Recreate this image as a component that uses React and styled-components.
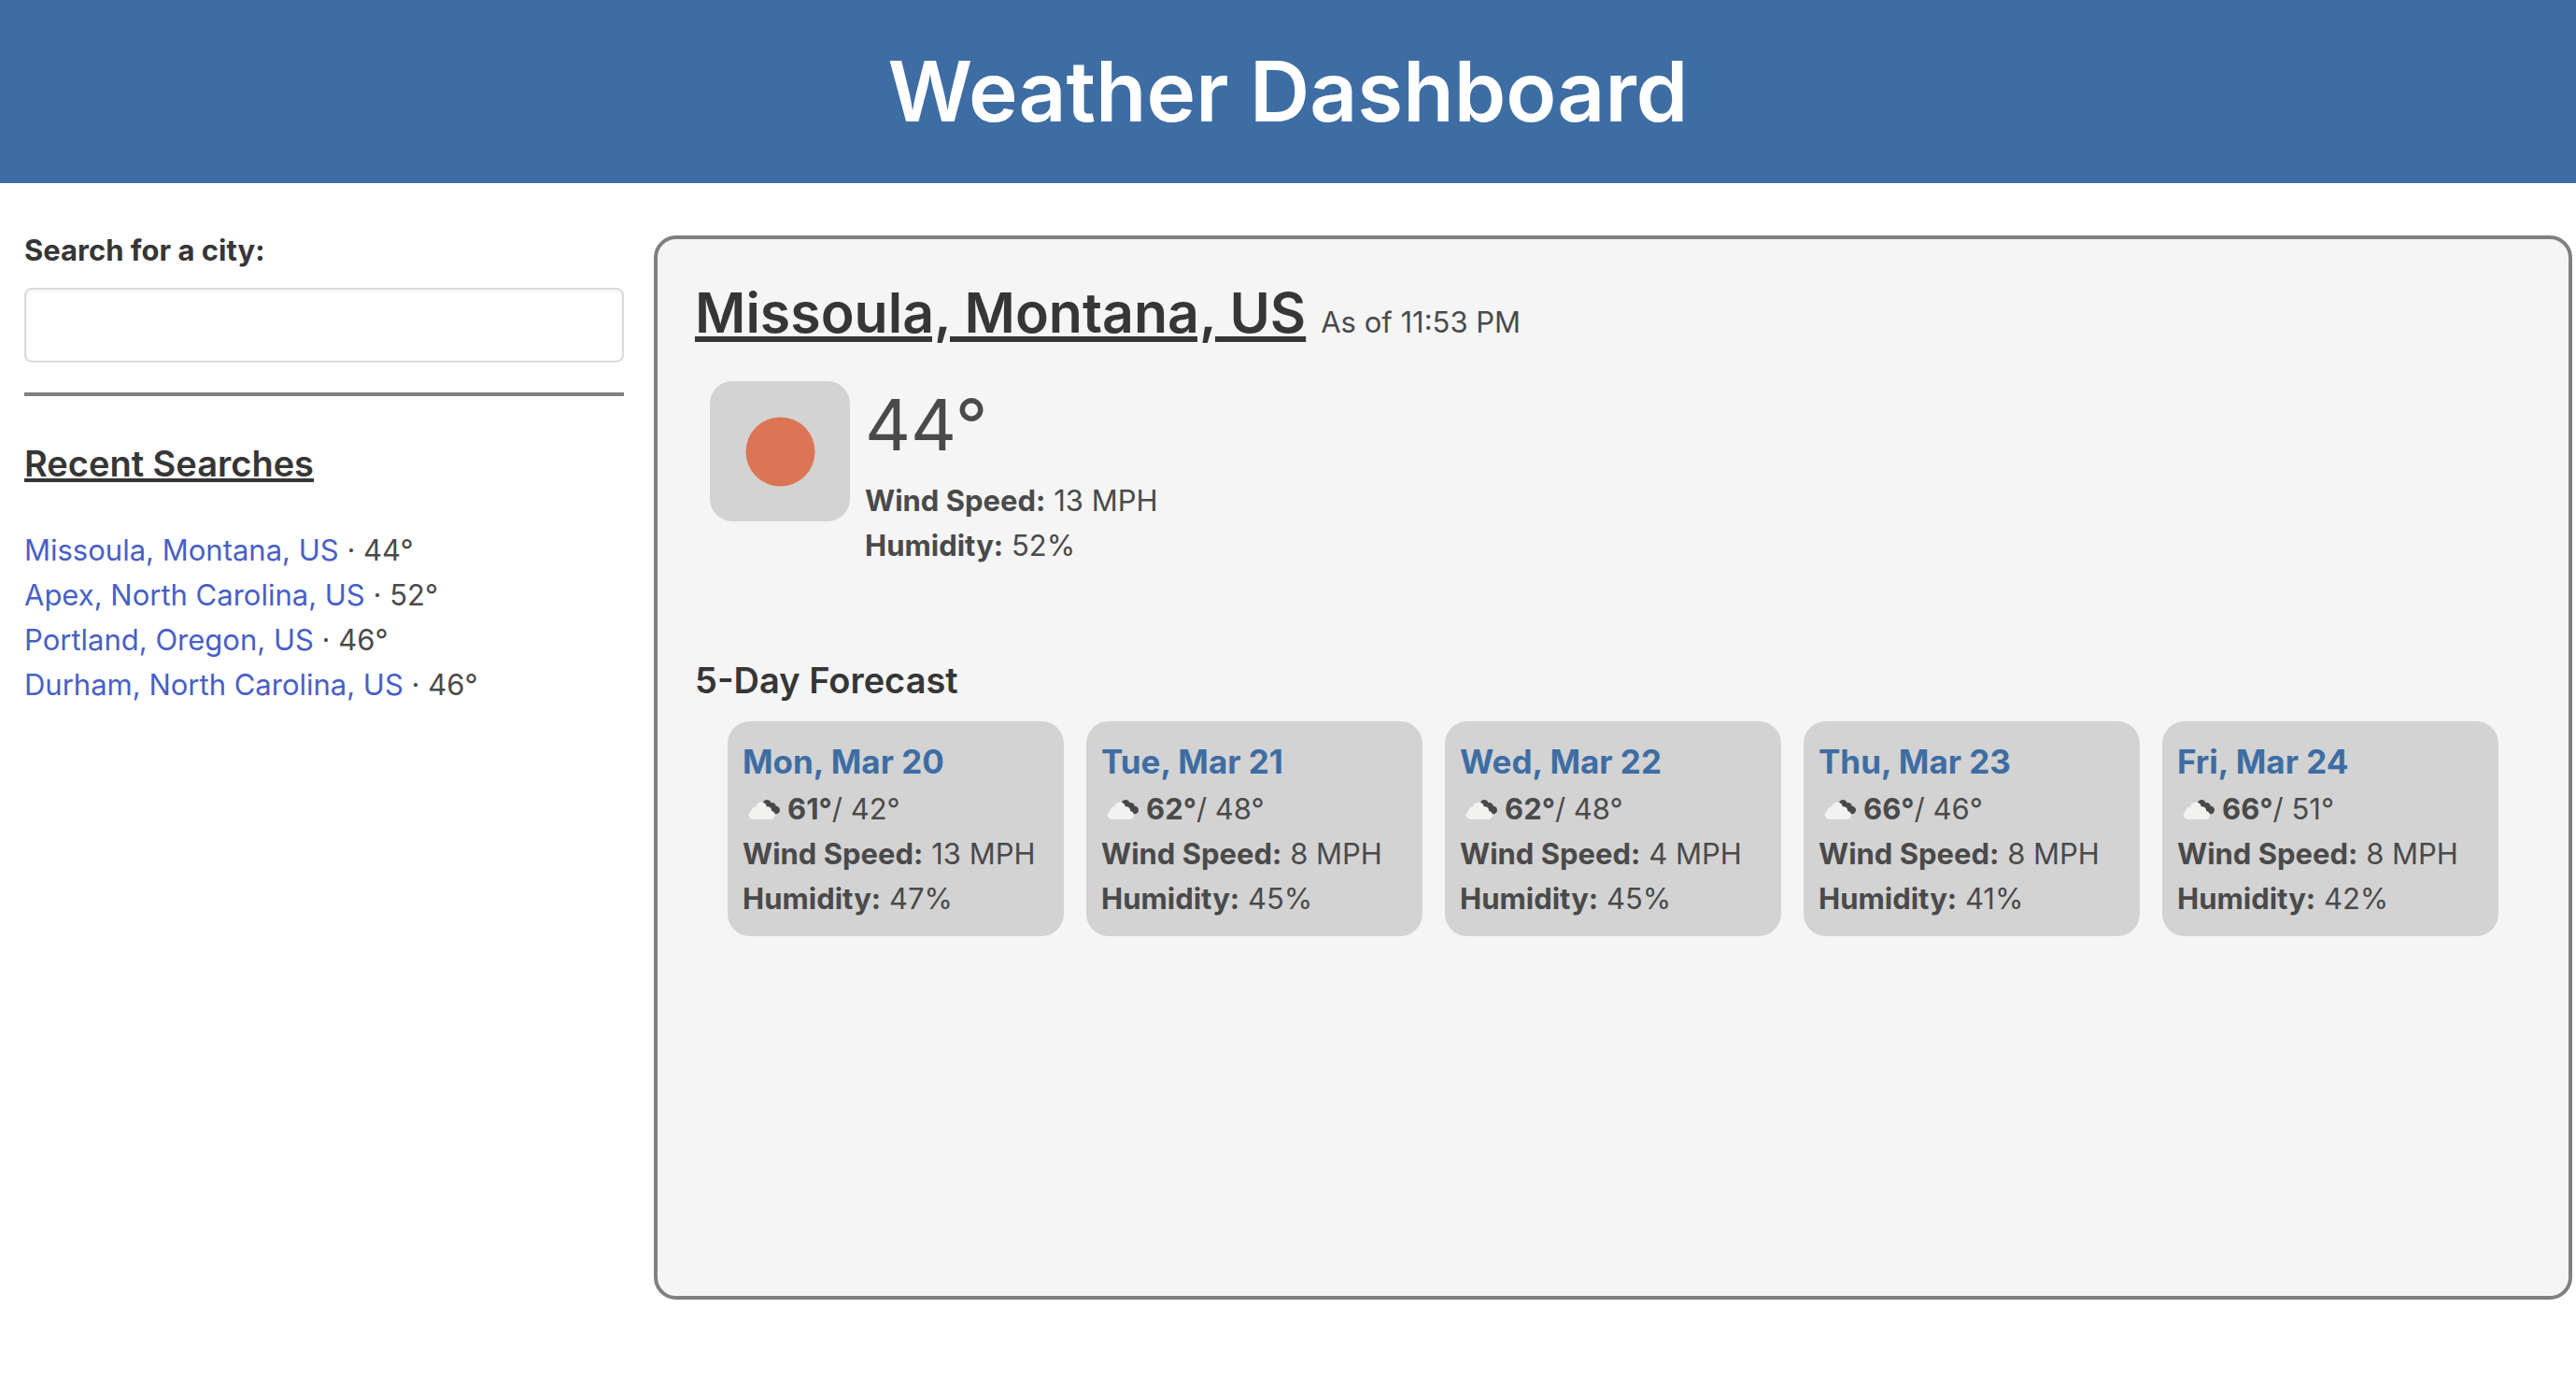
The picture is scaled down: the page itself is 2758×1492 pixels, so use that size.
import React from "react";
import styled, { createGlobalStyle } from "styled-components";

const colors = {
  brand: "#3e6da3",
  heading: "#363636",
  text: "#4a4a4a",
  link: "#485fc7",
  line: "#808080",
  panel: "#f5f5f5",
  tile: "#d3d3d3",
};

const GlobalStyle = createGlobalStyle`
  *, *::before, *::after { box-sizing: border-box; }
  body {
    margin: 0;
    background: #fff;
    color: ${colors.text};
    font-family: Inter, "Liberation Sans", sans-serif;
    font-size: 31px;
    line-height: 48px;
  }
  h1, h2, h3, p, ul { margin: 0; padding: 0; }
`;

const Page = styled.div`
  display: flex;
  flex-direction: column;
  min-height: 100vh;
`;

const Header = styled.header`
  padding: 44px 24px;
  background: ${colors.brand};
  text-align: center;
`;

const PageTitle = styled.h1`
  color: #fff;
  font-size: 89px;
  font-weight: 600;
  line-height: 108px;
`;

const Main = styled.main`
  flex: 1;
  display: grid;
  grid-template-columns: 25% minmax(0, 1fr);
  gap: 10px;
  padding: 0 4px 0 2px;
`;

const Sidebar = styled.aside`
  padding: 48px 22px 48px 24px;
`;

const SearchLabel = styled.label`
  display: block;
  margin-bottom: 16px;
  color: ${colors.heading};
  font-weight: 700;
`;

const SearchInput = styled.input`
  display: block;
  width: 100%;
  height: 80px;
  padding: 0 20px;
  border: 2px solid #dbdbdb;
  border-radius: 8px;
  background: #fff;
  box-shadow: inset 0 2px 4px rgba(10, 10, 10, 0.05);
  color: ${colors.heading};
  font: inherit;
`;

const Divider = styled.hr`
  height: 4px;
  margin: 32px 0 48px;
  border: 0;
  background: ${colors.line};
`;

const SidebarTitle = styled.h2`
  margin-bottom: 45px;
  color: ${colors.heading};
  font-size: 38px;
  font-weight: 600;
  line-height: 48px;
  text-decoration: underline 4px;
  text-underline-offset: 2px;
`;

const RecentList = styled.ul`
  list-style: none;
`;

const CityLink = styled.a`
  color: ${colors.link};
  text-decoration: none;
`;

const Panel = styled.section`
  margin: 56px 0 101px;
  padding: 40px;
  border: 4px solid ${colors.line};
  border-radius: 24px;
  background: ${colors.panel};
`;

const CityHeading = styled.div`
  display: flex;
  align-items: baseline;
  gap: 16px;
`;

const CityName = styled.h2`
  color: ${colors.heading};
  font-size: 59px;
  font-weight: 600;
  line-height: 78px;
  text-decoration: underline 6px;
  text-underline-offset: 4px;
`;

const Current = styled.div`
  display: flex;
  gap: 16px;
  margin-top: 34px;
  padding-left: 16px;
`;

const CurrentIcon = styled.div`
  flex: none;
  width: 150px;
  height: 150px;
  border-radius: 24px;
  background: ${colors.tile};

  svg { display: block; }
`;

const CurrentTemp = styled.p`
  margin-bottom: 12px;
  font-size: 76px;
  line-height: 92px;
`;

const ForecastTitle = styled.h3`
  margin-top: 96px;
  color: ${colors.heading};
  font-size: 38px;
  font-weight: 600;
  line-height: 48px;
`;

const ForecastRow = styled.div`
  display: grid;
  grid-template-columns: repeat(5, minmax(0, 1fr));
  gap: 24px;
  padding: 20px 35px 0;
`;

const DayCard = styled.article`
  padding: 16px;
  border-radius: 24px;
  background: ${colors.tile};
  white-space: nowrap;
`;

const DayName = styled.h3`
  color: ${colors.brand};
  font-size: 35px;
  font-weight: 700;
  line-height: 54px;
`;

const DayTemps = styled.p`
  display: flex;
  align-items: center;
  white-space: pre;
`;

const Sun = () => (
  <svg width="150" height="150" viewBox="0 0 150 150" role="img" aria-label="Clear sky">
    <circle cx="75.5" cy="75.5" r="37" fill="#dc7554" />
  </svg>
);

const BrokenClouds = () => (
  <svg width="48" height="48" viewBox="0 0 48 48" role="img" aria-label="Broken clouds">
    <g fill="#484848">
      <circle cx="26.2" cy="18.2" r="4.3" />
      <circle cx="31.4" cy="21.4" r="4.4" />
      <circle cx="35.8" cy="25" r="4.2" />
      <path d="M24 21 L30 18 L38 28 L33 29 Z" />
    </g>
    <g fill="#f2f2f0">
      <circle cx="11.4" cy="30.2" r="4.7" />
      <circle cx="14" cy="26" r="4.6" />
      <circle cx="20" cy="22.6" r="6" />
      <circle cx="26.4" cy="26" r="4.8" />
      <circle cx="30.4" cy="30.4" r="4.5" />
      <path d="M11.4 24 H27 L32 28 V34.9 H11.4 Z" />
    </g>
  </svg>
);

const recent = [
  { city: "Missoula, Montana, US", temp: 44 },
  { city: "Apex, North Carolina, US", temp: 52 },
  { city: "Portland, Oregon, US", temp: 46 },
  { city: "Durham, North Carolina, US", temp: 46 },
];

const forecast = [
  { day: "Mon, Mar 20", high: 61, low: 42, wind: 13, humidity: 47 },
  { day: "Tue, Mar 21", high: 62, low: 48, wind: 8, humidity: 45 },
  { day: "Wed, Mar 22", high: 62, low: 48, wind: 4, humidity: 45 },
  { day: "Thu, Mar 23", high: 66, low: 46, wind: 8, humidity: 41 },
  { day: "Fri, Mar 24", high: 66, low: 51, wind: 8, humidity: 42 },
];

const Conditions = ({ wind, humidity }) => (
  <>
    <p><strong>Wind Speed:</strong> {wind} MPH</p>
    <p><strong>Humidity:</strong> {humidity}%</p>
  </>
);

export default function App() {
  return (
    <Page>
      <GlobalStyle />
      <Header>
        <PageTitle>Weather Dashboard</PageTitle>
      </Header>
      <Main>
        <Sidebar>
          <SearchLabel htmlFor="city-search">Search for a city:</SearchLabel>
          <SearchInput id="city-search" type="text" />
          <Divider />
          <SidebarTitle>Recent Searches</SidebarTitle>
          <RecentList>
            {recent.map(({ city, temp }) => (
              <li key={city}>
                <CityLink href="#">{city}</CityLink> · {temp}°
              </li>
            ))}
          </RecentList>
        </Sidebar>
        <Panel>
          <CityHeading>
            <CityName>Missoula, Montana, US</CityName>
            <span>As of 11:53 PM</span>
          </CityHeading>
          <Current>
            <CurrentIcon><Sun /></CurrentIcon>
            <div>
              <CurrentTemp>44°</CurrentTemp>
              <Conditions wind={13} humidity={52} />
            </div>
          </Current>
          <ForecastTitle>5-Day Forecast</ForecastTitle>
          <ForecastRow>
            {forecast.map(({ day, high, low, wind, humidity }) => (
              <DayCard key={day}>
                <DayName>{day}</DayName>
                <DayTemps>
                  <BrokenClouds />
                  <strong>{high}°</strong>/ {low}°
                </DayTemps>
                <Conditions wind={wind} humidity={humidity} />
              </DayCard>
            ))}
          </ForecastRow>
        </Panel>
      </Main>
    </Page>
  );
}
